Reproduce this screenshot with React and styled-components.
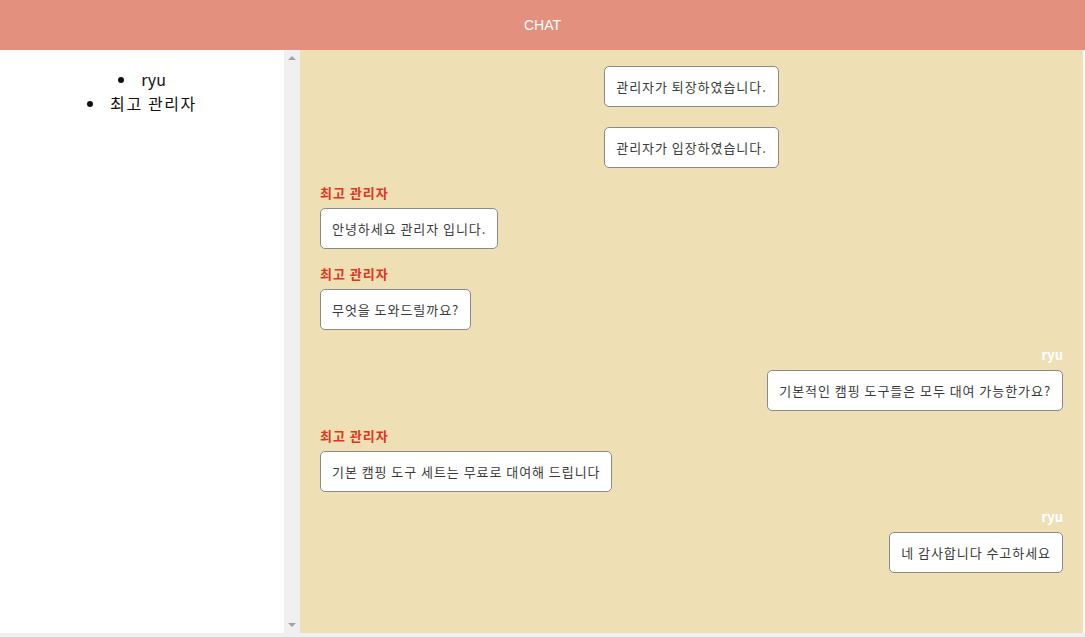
import styled, { createGlobalStyle } from "styled-components";

const GlobalStyle = createGlobalStyle`
  html, body {
    margin: 0;
    padding: 0;
    background: #ffffff;
    font-family: "Noto Sans CJK KR", "Noto Sans", sans-serif;
  }
`;

const Page = styled.div`
  width: 1085px;
  height: 637px;
  display: flex;
  flex-direction: column;
  overflow: hidden;
  background: #f0f0f0;
`;

const Header = styled.header`
  height: 50px;
  flex-shrink: 0;
  background: #e3907f;
  color: #ffffff;
  font-family: "Liberation Sans", Arial, sans-serif;
  font-size: 14px;
  display: flex;
  align-items: center;
  justify-content: center;
`;

const Body = styled.div`
  display: flex;
  height: 583px;
  padding-right: 2px;
  background: #fafafa;
`;

const Sidebar = styled.aside`
  width: 284px;
  background: #ffffff;
`;

const UserList = styled.ul`
  margin: 17px 0 0;
  padding: 0;
  list-style: disc inside;
  text-align: center;
  font-size: 16px;
  line-height: 24px;
  color: #111111;
`;

const UserItem = styled.li`
  letter-spacing: ${(p) => (p.$wide ? "1.6px" : "0")};
`;

const ScrollTrack = styled.div`
  width: 16px;
  background: #f0f0f0;
  display: flex;
  flex-direction: column;
  justify-content: space-between;
  align-items: center;
  padding: 6px 0;
  box-sizing: border-box;
`;

const Arrow = styled.div`
  width: 0;
  height: 0;
  border-left: 4px solid transparent;
  border-right: 4px solid transparent;
  ${(p) =>
    p.$down
      ? "border-top: 4px solid #a3a3a3;"
      : "border-bottom: 4px solid #a3a3a3;"}
`;

const ChatArea = styled.main`
  flex: 1;
  background: #eedfb5;
  padding: 12px 20px;
  display: flex;
  flex-direction: column;
  gap: 16px;
`;

const Message = styled.div`
  display: flex;
  flex-direction: column;
  align-items: ${(p) =>
    p.$side === "center" ? "center" : p.$side === "right" ? "flex-end" : "flex-start"};
  padding-top: ${(p) => (p.$side === "center" ? "4px" : "0")};
`;

const Name = styled.div`
  font-size: 13px;
  font-weight: bold;
  line-height: 18px;
  margin-bottom: 6px;
  letter-spacing: ${(p) => (p.$mine ? "0" : "1px")};
  color: ${(p) => (p.$mine ? "#ffffff" : "#e0361c")};
`;

const Bubble = styled.div`
  background: #ffffff;
  border: 1px solid #8a8a8a;
  border-radius: 5px;
  padding: 10px 11px;
  font-size: 13px;
  line-height: 19px;
  color: #3a3a3a;
  letter-spacing: 0.95px;
`;

const messages = [
  { side: "center", text: "관리자가 퇴장하였습니다." },
  { side: "center", text: "관리자가 입장하였습니다." },
  { side: "left", name: "최고 관리자", text: "안녕하세요 관리자 입니다." },
  { side: "left", name: "최고 관리자", text: "무엇을 도와드릴까요?" },
  { side: "right", name: "ryu", text: "기본적인 캠핑 도구들은 모두 대여 가능한가요?" },
  { side: "left", name: "최고 관리자", text: "기본 캠핑 도구 세트는 무료로 대여해 드립니다" },
  { side: "right", name: "ryu", text: "네 감사합니다 수고하세요" },
];

const App = () => {
  return (
    <Page>
      <GlobalStyle />
      <Header>CHAT</Header>
      <Body>
        <Sidebar>
          <UserList>
            <UserItem>ryu</UserItem>
            <UserItem $wide>최고 관리자</UserItem>
          </UserList>
        </Sidebar>
        <ScrollTrack>
          <Arrow />
          <Arrow $down />
        </ScrollTrack>
        <ChatArea>
          {messages.map((m, i) => (
            <Message key={i} $side={m.side}>
              {m.name && <Name $mine={m.side === "right"}>{m.name}</Name>}
              <Bubble>{m.text}</Bubble>
            </Message>
          ))}
        </ChatArea>
      </Body>
    </Page>
  );
};

export default App;
